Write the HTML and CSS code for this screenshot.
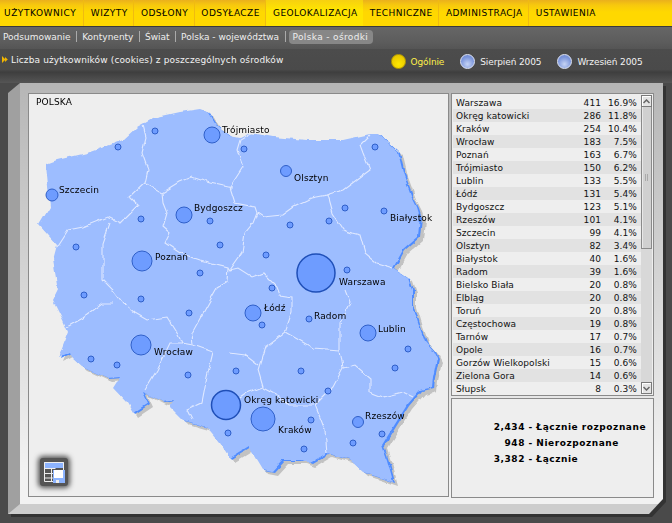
FILE: index.html
```html
<!DOCTYPE html>
<html lang="pl">
<head>
<meta charset="utf-8">
<title>Geolokalizacja</title>
<link rel="stylesheet" href="styles.css">
</head>
<body>
<nav class="topnav">
  <a>UŻYTKOWNICY</a><a>WIZYTY</a><a>ODSŁONY</a><a>ODSYŁACZE</a><a class="on">GEOLOKALIZACJA</a><a>TECHNICZNE</a><a>ADMINISTRACJA</a><a>USTAWIENIA</a>
</nav>
<nav class="subnav">
  <a>Podsumowanie</a><i></i><a>Kontynenty</a><i></i><a>Świat</a><i></i><a>Polska - województwa</a><i></i><a class="on">Polska - ośrodki</a>
</nav>
<header class="titlebar">
  <svg class="arrow" width="7" height="7" viewBox="0 0 7 7"><path d="M0 0l3.500 3.500L0 7zM3 1l2.800 2.500L3 6z" fill="#f0b400"/></svg>
  <h1>Liczba użytkowników (cookies) z poszczególnych ośrodków</h1>
  <ul class="legend">
    <li class="active"><b class="dot"></b>Ogólnie</li>
    <li><b class="dot"></b>Sierpień 2005</li>
    <li><b class="dot"></b>Wrzesień 2005</li>
  </ul>
</header>
<div class="panelwrap">
<main class="panel">
  <section class="mapbox">
    <svg class="map" viewBox="29 94 419 402" width="419" height="402">
      <defs>
        <path id="pl" d="M46 164L57 160L87 153L110 145L123 140L137 127L153 118L180 112L200 109L208 112L216 125L222 130L230 136L240 138L250 133L273 137L307 140L343 140L370 134L377 134L387 142L398 152L403 173L411 195L417 207L420 217L418 237L403 250L393 268L408 278L412 290L412 303L418 323L425 342L434 352L437 358L433 377L432 387L420 390L407 405L382 445L387 460L393 482L363 472L350 460L327 453L310 463L302 460L283 460L272 472L262 470L248 447L230 458L220 443L207 427L183 420L170 407L175 400L163 402L143 392L148 403L133 413L127 403L113 388L120 377L107 378L83 367L73 358L70 352L58 358L68 332L63 320L53 300L58 290L53 260L57 245L39 225L50 207Z"/>
        <filter id="wob" x="-5%" y="-5%" width="110%" height="110%">
          <feTurbulence type="fractalNoise" baseFrequency="0.09" numOctaves="2" seed="4"/>
          <feDisplacementMap in="SourceGraphic" scale="5" xChannelSelector="R" yChannelSelector="G"/>
        </filter>
      </defs>
      <g class="wobble">
        <use href="#pl" class="shadow" x="5" y="4"/>
        <use href="#pl" class="edge" x="2" y="1"/>
        <use href="#pl" class="land"/>
        <path class="border" d="M143 125L146 137L142 153L148 170L145 183L130 197L138 205L120 223L108 217L83 227L68 230L57 247M110 223L103 243L103 280L113 290L123 303L135 313L147 320L167 317L177 333L182 343L193 345L213 352L207 377L202 403L187 410L192 420M67 327L83 318L103 303L113 303M182 343L170 343L157 370L145 390M145 183L162 193L163 203L167 213L163 227L170 233L165 243L180 253L200 260L228 267L227 282L217 288L203 313L192 333L193 345M162 193L180 182L192 177L210 183L233 188M252 133L240 140L237 150L243 167L230 187L235 203L255 207L257 213L263 217L282 215L293 207L312 198L327 195L343 190L370 170L363 153L360 145L370 135M257 213L253 223L245 233L242 253L230 270L228 267M230 270L238 268L252 277L263 273L277 287L280 295L292 297L292 312L285 332L265 347L258 370L263 387L247 393L237 400L228 412M230 353L245 355L258 365M263 388L280 397L288 405L313 405M285 332L313 348L340 350L343 368L333 387L315 405L325 430L327 453M340 350L340 323L350 303L345 290M327 195L332 213L343 230L352 233L360 235L365 253L377 263L393 268M343 368L355 365L370 378L370 392L383 397L403 392L413 397"/>
      </g>
      <g class="pins">
        <circle cx="316" cy="273" r="19" class="big"/>
        <circle cx="226" cy="405" r="14.500" class="big"/>
        <circle cx="263" cy="419" r="12"/><circle cx="142" cy="261" r="10"/><circle cx="141" cy="345" r="10"/>
        <circle cx="212" cy="135" r="8"/><circle cx="184" cy="215" r="8"/><circle cx="253" cy="313" r="8"/><circle cx="368" cy="333" r="8"/>
        <circle cx="52" cy="195" r="6"/><circle cx="286" cy="171" r="5.500"/><circle cx="358" cy="422" r="5.500"/>
        <circle cx="155" cy="131" r="3"/><circle cx="118" cy="147" r="3"/><circle cx="141" cy="219" r="3"/><circle cx="76" cy="247" r="3"/><circle cx="210" cy="221" r="3"/><circle cx="220" cy="245" r="3"/><circle cx="200" cy="273" r="3"/><circle cx="244" cy="149" r="3"/><circle cx="375" cy="147" r="3"/><circle cx="345" cy="208" r="3"/><circle cx="384" cy="211" r="3"/><circle cx="290" cy="225" r="3"/><circle cx="329" cy="221" r="3"/><circle cx="266" cy="255" r="3"/><circle cx="347" cy="270" r="3"/><circle cx="272" cy="288" r="3"/><circle cx="84" cy="295" r="3"/><circle cx="141" cy="299" r="3"/><circle cx="189" cy="313" r="3"/><circle cx="91" cy="359" r="3"/><circle cx="117" cy="365" r="3"/><circle cx="188" cy="375" r="3"/><circle cx="236" cy="371" r="3"/><circle cx="228" cy="433" r="3"/><circle cx="262" cy="325" r="3"/><circle cx="309" cy="319" r="3"/><circle cx="408" cy="349" r="3"/><circle cx="395" cy="368" r="3"/><circle cx="301" cy="371" r="3"/><circle cx="328" cy="391" r="3"/><circle cx="311" cy="420" r="3"/><circle cx="304" cy="449" r="3"/><circle cx="353" cy="443" r="3"/><circle cx="382" cy="434" r="3"/>
      </g>
      <g class="labels">
        <text x="36" y="105">POLSKA</text>
        <text x="222" y="133">Trójmiasto</text><text x="59" y="193">Szczecin</text><text x="294" y="181">Olsztyn</text><text x="194" y="211">Bydgoszcz</text><text x="390" y="221">Białystok</text><text x="155" y="260">Poznań</text><text x="339" y="285">Warszawa</text><text x="264" y="311">Łódź</text><text x="314" y="319">Radom</text><text x="378" y="332">Lublin</text><text x="154" y="355">Wrocław</text><text x="244" y="403">Okręg katowicki</text><text x="365" y="419">Rzeszów</text><text x="278" y="433">Kraków</text>
      </g>
    </svg>
    <div class="tool">
      <svg width="22" height="22" viewBox="0 0 22 22"><path d="M1 1h20v6H1z" fill="#8db4ff"/><path d="M1.500 1.500h19v19h-19zM1.500 7.500h11M1.500 12.500h11M1.500 17h11M8.500 7.500v13" fill="none" stroke="#eee"/><path d="M10 9h12v13H10z" fill="#8db4ff"/><path d="M11 9h9v8h-9z" fill="#fff"/><path d="M13 19h3v3h-3z" fill="#eee"/></svg>
    </div>
  </section>
  <div class="side">
    <section class="listbox">
      <table class="stats">
        <tr><td>Warszawa</td><td>411</td><td>16.9%</td></tr>
        <tr><td>Okręg katowicki</td><td>286</td><td>11.8%</td></tr>
        <tr><td>Kraków</td><td>254</td><td>10.4%</td></tr>
        <tr><td>Wrocław</td><td>183</td><td>7.5%</td></tr>
        <tr><td>Poznań</td><td>163</td><td>6.7%</td></tr>
        <tr><td>Trójmiasto</td><td>150</td><td>6.2%</td></tr>
        <tr><td>Lublin</td><td>133</td><td>5.5%</td></tr>
        <tr><td>Łódź</td><td>131</td><td>5.4%</td></tr>
        <tr><td>Bydgoszcz</td><td>123</td><td>5.1%</td></tr>
        <tr><td>Rzeszów</td><td>101</td><td>4.1%</td></tr>
        <tr><td>Szczecin</td><td>99</td><td>4.1%</td></tr>
        <tr><td>Olsztyn</td><td>82</td><td>3.4%</td></tr>
        <tr><td>Białystok</td><td>40</td><td>1.6%</td></tr>
        <tr><td>Radom</td><td>39</td><td>1.6%</td></tr>
        <tr><td>Bielsko Biała</td><td>20</td><td>0.8%</td></tr>
        <tr><td>Elbląg</td><td>20</td><td>0.8%</td></tr>
        <tr><td>Toruń</td><td>20</td><td>0.8%</td></tr>
        <tr><td>Częstochowa</td><td>19</td><td>0.8%</td></tr>
        <tr><td>Tarnów</td><td>17</td><td>0.7%</td></tr>
        <tr><td>Opole</td><td>16</td><td>0.7%</td></tr>
        <tr><td>Gorzów Wielkopolski</td><td>15</td><td>0.6%</td></tr>
        <tr><td>Zielona Gora</td><td>14</td><td>0.6%</td></tr>
        <tr><td>Słupsk</td><td>8</td><td>0.3%</td></tr>
      </table>
      <div class="scrollbar">
        <span class="sbtn"><svg width="7" height="5" viewBox="0 0 7 5"><path d="M.5 4L3.500 1L6.500 4" fill="none" stroke="#666" stroke-width="1.500"/></svg></span>
        <span class="thumb"><i></i></span>
        <span class="track"></span>
        <span class="sbtn"><svg width="7" height="5" viewBox="0 0 7 5"><path d="M.5 1L3.500 4L6.500 1" fill="none" stroke="#666" stroke-width="1.500"/></svg></span>
      </div>
    </section>
    <section class="totals">
      <span class="n">2,434</span><span>-</span><span>Łącznie rozpoznane</span>
      <span class="n">948</span><span>-</span><span>Nierozpoznane</span>
      <span class="n">3,382</span><span>-</span><span>Łącznie</span>
    </section>
  </div>
</main>
</div>
</body>
</html>
```
FILE: styles.css
```css
* { box-sizing: border-box; }
html, body { margin: 0; height: 523px; overflow: hidden; }
body {
  background: #4a4a4a;
  font-family: "DejaVu Sans", sans-serif;
  font-size: 9px;
  color: #000;
}
.topnav {
  display: flex;
  height: 27px;
  background: linear-gradient(#eab01c 0, #f7c80e 5px, #ffd800 12px, #ffd800 100%);
  border-bottom: 1px solid #3a3a3a;
}
.topnav a {
  padding: 0 5.600px 0 6.600px;
  line-height: 26px;
  letter-spacing: .45px;
  white-space: nowrap;
  border-right: 1px solid #f0bb10;
}
.topnav a:first-child { padding: 0 7px 0 4px; letter-spacing: .55px; }
.topnav a.on { background: linear-gradient(#f6d010 0, #ffe500 10px); border-right: 0; }
.topnav a:last-child { border-right: 0; }
.subnav {
  display: flex;
  align-items: center;
  height: 22px;
  padding-left: 3px;
  padding-bottom: 3px;
  background: linear-gradient(#666, #5c5c5c 70%, #555);
  color: #eee;
}
.subnav i { width: 1px; height: 11px; background: #aaa; margin: 0 5px 0 5.500px; }
.subnav a.on { background: #878787; border-radius: 4px; padding: 2px 5px 2px 4px; margin-left: -2px; letter-spacing: .35px; }
.titlebar {
  display: flex;
  align-items: center;
  height: 34px;
  padding: 0 0 11px 2px;
  background: linear-gradient(#4c4c4c, #4a4a4a 60%, #3e3e3e 68%, #555 100%);
  color: #f2f2f2;
}
.arrow { margin: 0 2px 2px 0; }
h1 { margin: 0 0 2px; font: inherit; letter-spacing: .13px; }
.legend {
  display: flex;
  gap: 16px;
  margin: 2px 0 0 auto;
  padding: 0 29.500px 0 0;
  list-style: none;
  letter-spacing: -.12px;
}
.legend li { display: flex; align-items: center; gap: 5px; }
.legend .active { color: #fff04a; }
.dot {
  width: 15px; height: 15px;
  border-radius: 50%;
  background: radial-gradient(circle at 50% 70%, #c6d4f5, #7d97dc 60%, #6d83c8);
  border: 1px solid #dfe6f7;
}
.active .dot {
  background: radial-gradient(circle at 50% 70%, #ffe900, #e6c400 80%);
  border-color: #b99f00;
}
.panelwrap {
  width: 655px;
  margin-left: 8px;
  filter: drop-shadow(3px 3px 0 #333);
}
.panel {
  display: flex;
  gap: 2px;
  height: 431px;
  padding: 10px 9px 6px 8px;
  border-left: 12px solid #a0a0a0;
  border-bottom: 10px solid #cdcdcd;
  background: linear-gradient(#b6b6b6, #f2f2f2 92%);
  clip-path: polygon(12px 0, 100% 0, 100% 416px, 641px 100%, 0 100%, 0 10px);
}
.mapbox {
  position: relative;
  flex: 0 0 421px;
  height: 404px;
  background: #eeeeee;
  border: 1px solid #8a8a8a;
}
.map { display: block; }
.wobble { filter: url(#wob); }
.land { fill: #9dbdff; }
.edge { fill: #4f8cff; }
.shadow { fill: #c2c2c2; }
.border { fill: none; stroke: #dfe8ff; stroke-width: 1.100; }
.pins circle { fill: #6e9cff; stroke: #2f5fc8; stroke-width: 1; }
.pins .big { stroke: #1f4fb8; stroke-width: 1.500; }
.labels text { font-size: 9px; fill: #000; letter-spacing: .15px; }
.tool {
  position: absolute;
  left: 11px;
  bottom: 10px;
  width: 28px;
  height: 28px;
  display: flex;
  align-items: center;
  justify-content: center;
  background: #555;
  border-radius: 3px;
  box-shadow: 0 0 5px 2px #555;
}
.side { flex: 0 0 203px; display: flex; flex-direction: column; gap: 2px; }
.listbox {
  display: flex;
  height: 303px;
  padding: 1px;
  background: #eee;
  border: 1px solid #8a8a8a;
}
.stats {
  flex: 0 0 188px;
  width: 188px;
  height: 299px;
  margin-top: 1px;
  table-layout: fixed;
  border-collapse: collapse;
  background: #eee;
  letter-spacing: .08px;
}
.stats tr { height: 13px; }
.stats tr:nth-child(even) { background: #e2e2e2; }
.stats td { padding: 2px 0 0; line-height: 11px; text-align: right; color: #111; white-space: nowrap; }
.stats td:first-child { text-align: left; padding-left: 3px; width: 120px; }
.stats td:nth-child(2) { width: 28px; }
.stats td:nth-child(3) { width: 40px; padding-right: 4px; }
.scrollbar { flex: 1; display: flex; flex-direction: column; background: #d8d8d8; }
.sbtn {
  height: 12px;
  display: flex;
  align-items: center;
  justify-content: center;
  background: #e4e4e4;
  border: 1px solid #7a7a7a;
  box-shadow: inset 1px 1px 0 #fff;
}
.thumb {
  height: 142px;
  display: flex;
  align-items: center;
  justify-content: center;
  background: #d0d0d0;
  border: 1px solid #8a8a8a;
  border-top: 0;
  box-shadow: inset 1px 0 0 #e8e8e8;
}
.thumb i { width: 3px; height: 7px; border: 1px solid #aaa; border-width: 0 1px; }
.track { flex: 1; }
.totals {
  flex: 1;
  display: grid;
  grid-template-columns: 73px auto 1fr;
  grid-auto-rows: 16px;
  column-gap: 3.500px;
  align-content: start;
  align-items: center;
  padding-top: 20px;
  background: #eee;
  border: 1px solid #8a8a8a;
  font-weight: bold;
  letter-spacing: .55px;
  color: #000;
}
.totals .n { text-align: right; }
```
